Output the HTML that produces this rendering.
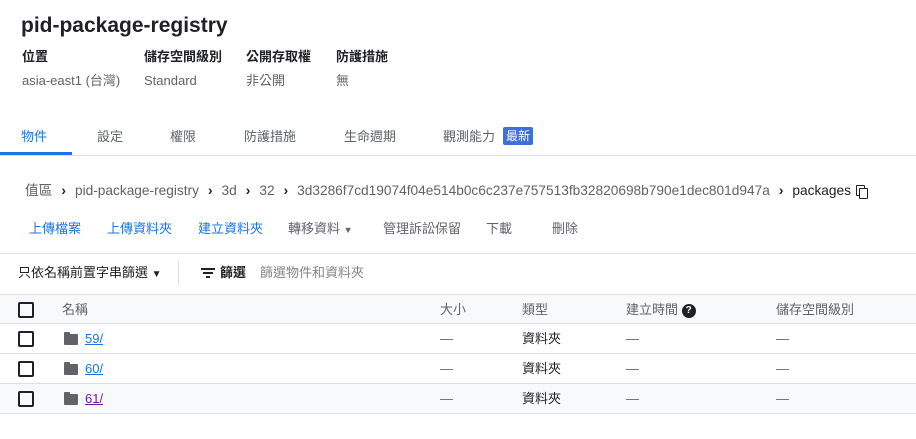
<!DOCTYPE html>
<html><head><meta charset="utf-8"><style>
*{margin:0;padding:0;box-sizing:border-box}
body{width:916px;height:439px;background:#fff;font-family:"Liberation Sans","Noto Sans CJK TC",sans-serif;color:#202124;position:relative;overflow:hidden;font-size:13px}
.a{position:absolute;white-space:nowrap;line-height:16px}
.g{color:#5f6368}
.b{color:#1a73e8}
.cb{position:absolute;left:18px;width:16px;height:16px;border:2px solid #202124;border-radius:2px}
.row{position:absolute;left:0;width:916px;height:30px;border-bottom:1px solid #e0e0e0}
.fold{position:absolute;left:64px;width:14px;height:11px;background:#5f6368;border-radius:1px}
.fold:before{content:"";position:absolute;left:0;top:-2px;width:6px;height:3px;background:#5f6368;border-radius:1px 1px 0 0}
.lk{position:absolute;left:85px;text-decoration:underline;color:#1a73e8}
.ch{color:#202124;font-weight:bold;margin:0 9px}
</style></head><body>
<div class="a" style="left:21px;top:14px;font-size:21px;font-weight:bold;line-height:24px">pid-package-registry</div>
<div class="a" style="left:22px;top:49px;font-weight:bold">位置</div>
<div class="a" style="left:144px;top:49px;font-weight:bold">儲存空間級別</div>
<div class="a" style="left:246px;top:49px;font-weight:bold">公開存取權</div>
<div class="a" style="left:336px;top:49px;font-weight:bold">防護措施</div>
<div class="a g" style="left:22px;top:73px">asia-east1 (台灣)</div>
<div class="a g" style="left:144px;top:73px">Standard</div>
<div class="a g" style="left:246px;top:73px">非公開</div>
<div class="a g" style="left:336px;top:73px">無</div>
<div class="a" style="left:21px;top:129px;color:#1a73e8">物件</div>
<div class="a g" style="left:97px;top:129px">設定</div>
<div class="a g" style="left:170px;top:129px">權限</div>
<div class="a g" style="left:244px;top:129px">防護措施</div>
<div class="a g" style="left:344px;top:129px">生命週期</div>
<div class="a g" style="left:443px;top:129px">觀測能力</div>
<div class="a" style="left:503px;top:127px;background:#3f6fd8;color:#fff;padding:1px 3px;border-radius:2px;font-size:12px">最新</div>
<div class="a" style="left:0;top:152px;width:72px;height:3px;background:#1a73e8"></div>
<div class="a" style="left:0;top:155px;width:916px;height:1px;background:#e0e0e0"></div>
<div class="a g" style="left:25px;top:183px;font-size:13.7px">值區<span class="ch">›</span>pid-package-registry<span class="ch">›</span>3d<span class="ch">›</span>32<span class="ch">›</span>3d3286f7cd19074f04e514b0c6c237e757513fb32820698b790e1dec801d947a<span class="ch">›</span><span style="color:#202124">packages</span></div>
<div class="a" style="left:856px;top:185px;width:9px;height:11px;border:1.5px solid #202124;border-radius:1px"></div>
<div class="a" style="left:859px;top:188px;width:9px;height:11px;border:1.5px solid #202124;background:#fff;border-radius:1px"></div>
<div class="a b" style="left:29px;top:221px">上傳檔案</div>
<div class="a b" style="left:107px;top:221px">上傳資料夾</div>
<div class="a b" style="left:198px;top:221px">建立資料夾</div>
<div class="a g" style="left:288px;top:221px">轉移資料 <span style="font-size:9px">▼</span></div>
<div class="a g" style="left:383px;top:221px">管理訴訟保留</div>
<div class="a g" style="left:486px;top:221px">下載</div>
<div class="a g" style="left:552px;top:221px">刪除</div>
<div class="a" style="left:0;top:253px;width:916px;height:1px;background:#e0e0e0"></div>
<div class="a" style="left:18px;top:265px">只依名稱前置字串篩選 <span style="font-size:10px">▼</span></div>
<div class="a" style="left:178px;top:261px;width:1px;height:24px;background:#dadce0"></div>
<div class="a" style="left:201px;top:268px;width:14px;height:2px;background:#202124"></div>
<div class="a" style="left:203px;top:272px;width:10px;height:2px;background:#202124"></div>
<div class="a" style="left:206px;top:276px;width:4px;height:2px;background:#202124"></div>
<div class="a" style="left:220px;top:265px;font-weight:bold">篩選</div>
<div class="a" style="left:260px;top:265px;color:#80868b">篩選物件和資料夾</div>
<div class="row" style="top:294px;background:#f8f9fa;border-top:1px solid #e0e0e0"></div>
<div class="cb" style="top:302px"></div>
<div class="a g" style="left:62px;top:302px">名稱</div>
<div class="a g" style="left:440px;top:302px">大小</div>
<div class="a g" style="left:522px;top:302px">類型</div>
<div class="a g" style="left:626px;top:302px">建立時間 <span style="display:inline-block;width:14px;height:14px;border-radius:7px;background:#202124;color:#fff;font-size:10px;text-align:center;line-height:14px;font-weight:bold;vertical-align:middle">?</span></div>
<div class="a g" style="left:776px;top:302px">儲存空間級別</div>
<div class="row" style="top:324px"></div>
<div class="row" style="top:354px"></div>
<div class="row" style="top:384px;background:#f8f9fa"></div>
<div class="cb" style="top:331px"></div><div class="fold" style="top:334px"></div><div class="a lk" style="top:331px">59/</div>
<div class="cb" style="top:361px"></div><div class="fold" style="top:364px"></div><div class="a lk" style="top:361px">60/</div>
<div class="cb" style="top:391px"></div><div class="fold" style="top:394px"></div><div class="a lk" style="top:391px;color:#681da8">61/</div>
<div class="a g" style="left:440px;top:331px">—</div><div class="a" style="left:522px;top:331px">資料夾</div><div class="a g" style="left:626px;top:331px">—</div><div class="a g" style="left:776px;top:331px">—</div>
<div class="a g" style="left:440px;top:361px">—</div><div class="a" style="left:522px;top:361px">資料夾</div><div class="a g" style="left:626px;top:361px">—</div><div class="a g" style="left:776px;top:361px">—</div>
<div class="a g" style="left:440px;top:391px">—</div><div class="a" style="left:522px;top:391px">資料夾</div><div class="a g" style="left:626px;top:391px">—</div><div class="a g" style="left:776px;top:391px">—</div>
</body></html>
